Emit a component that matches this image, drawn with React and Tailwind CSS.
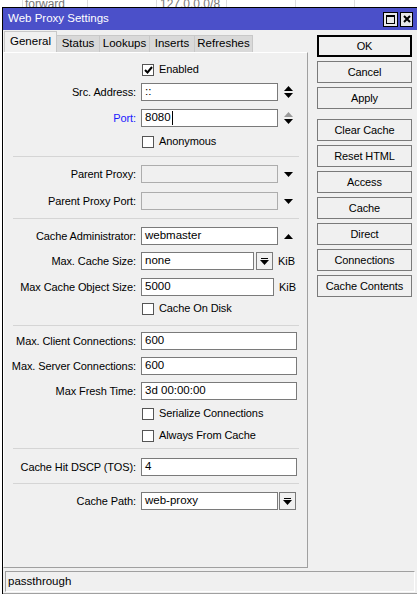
import React from 'react';

const font = "font-['Liberation_Sans',Arial,sans-serif]";

function Tri({ dir = 'down', color = '#000' }) {
  return (
    <svg width="9" height="5" viewBox="0 0 9 5">
      {dir === 'down' ? <path d="M0 0H9L4.5 5Z" fill={color} /> : <path d="M0 5H9L4.5 0Z" fill={color} />}
    </svg>
  );
}

function DropBtn() {
  return (
    <div className="flex h-[18px] w-[17px] shrink-0 flex-col items-center justify-center gap-px border border-[#7a7a7a] bg-[#f0f0f0]">
      <div className="h-px w-[7px] bg-black" />
      <Tri />
    </div>
  );
}

function Input({ value = '', w, disabled, caret }) {
  return (
    <div
      className={`flex h-[18px] shrink-0 items-center whitespace-nowrap border pl-[3px] text-[11.5px] text-black ${
        disabled ? 'border-[#adadad] bg-[#f0f0f0]' : 'border-[#7a7a7a] bg-white'
      }`}
      style={{ width: w }}
    >
      {value}
      {caret && <span className="ml-px h-[14px] w-px bg-black" />}
    </div>
  );
}

function Row({ label, blue, children, mt }) {
  return (
    <div className={`flex h-[18px] items-center gap-[5px] ${mt}`}>
      <div className={`w-[132px] whitespace-nowrap text-right text-[11px] tracking-[-0.1px] ${blue ? 'text-[#1a1aff]' : 'text-black'}`}>{label}</div>
      {children}
    </div>
  );
}

function Check({ label, checked, mt }) {
  return (
    <div className={`flex h-[13px] items-center gap-[5px] ${mt}`}>
      <div className="w-[132px]" />
      <div className="ml-px flex h-[12px] w-[12px] items-center justify-center border border-[#555] bg-white">
        {checked && (
          <svg width="9" height="8" viewBox="0 0 9 8">
            <path d="M1 4L3.5 6.5L8 1" stroke="#000" strokeWidth="2" fill="none" />
          </svg>
        )}
      </div>
      <span className="whitespace-nowrap text-[11px] tracking-[-0.1px] text-black">{label}</span>
    </div>
  );
}

function Sep({ mt }) {
  return <div className={`ml-[9px] mr-[8px] h-px bg-[#d5d5d5] ${mt}`} />;
}

function Btn({ children, ok, mt = 'mt-[4px]' }) {
  return (
    <div
      className={`flex h-[22px] w-[95px] items-center justify-center whitespace-nowrap text-[11px] tracking-[-0.1px] text-black ${mt} ${
        ok ? 'border-2 border-black bg-[#f0f0f0]' : 'border border-[#7a7a7a] bg-[#f0f0f0]'
      }`}
    >
      {children}
    </div>
  );
}

const tabs = ['Status', 'Lookups', 'Inserts', 'Refreshes'];
const tabW = { Status: 'w-[43px]', Lookups: 'w-[50px]', Inserts: 'w-[45px]', Refreshes: 'w-[58px]' };

export default function App() {
  return (
    <div className={`flex h-[594px] w-[417px] flex-col overflow-hidden bg-white ${font}`}>
      {/* background window peeking through */}
      <div className="flex h-[7px] shrink-0 items-end overflow-hidden text-[12px] leading-none text-[#777]">
        <div className="h-full w-[23px] border-r border-[#ddd]" />
        <div className="mb-[-3px] h-[12px] w-[65px] border-r border-[#ddd] pl-[2px]">forward</div>
        <div className="h-full w-[69px] border-r border-[#ddd]" />
        <div className="mb-[-3px] h-[12px] w-[70px] border-r border-[#ddd] pl-[3px]">127.0.0.0/8</div>
        <div className="h-full w-[69px] border-r border-[#ddd]" />
        <div className="h-full w-[59px] border-r border-[#ddd]" />
      </div>

      <div className="flex min-h-0 flex-1">
        <div className="w-[2px] shrink-0 bg-white" />
        <div className="flex min-w-0 flex-1 flex-col border-l border-t border-black bg-[#f0f0f0]">
          {/* title bar */}
          <div className="flex h-[22px] shrink-0 items-center bg-[#4b50c9] pl-[5px] pr-[4px]">
            <span className="flex-1 text-[11.5px] text-white">Web Proxy Settings</span>
            <div className="flex h-[15px] w-[15px] items-center justify-center border border-black bg-[#e8e8e8]">
              <div className="h-[9px] w-[9px] border border-black border-t-2" />
            </div>
            <div className="ml-[2px] flex h-[15px] w-[13px] items-center justify-center border border-black bg-[#e8e8e8]">
              <svg width="8" height="8" viewBox="0 0 8 8">
                <path d="M1 1L7 7M7 1L1 7" stroke="#000" strokeWidth="2" />
              </svg>
            </div>
          </div>

          <div className="flex min-h-0 flex-1">
            {/* left column */}
            <div className="flex w-[305px] shrink-0 flex-col">
              <div className="flex h-[22px] items-end pl-[1px] text-[11.5px] text-black">
                <div className="flex h-[21px] w-[53px] items-center justify-center border border-b-0 border-[#c8c8c8] bg-[#f0f0f0]">General</div>
                {tabs.map((t) => (
                  <div key={t} className={`flex h-[17px] ${tabW[t]} items-center justify-center border-r border-t border-[#c8c8c8] bg-[#d9d9d9]`}>
                    {t}
                  </div>
                ))}
              </div>
              <div className="flex flex-1 flex-col border border-b-[#a0a0a0] border-l-white border-r-[#a0a0a0] border-t-white">
                <Check label="Enabled" checked mt="mt-[10px]" />
                <Row label="Src. Address:" mt="mt-[7px]">
                  <Input value="::" w="137px" />
                  <div className="ml-[1px] flex flex-col gap-[2px]">
                    <Tri dir="up" />
                    <Tri />
                  </div>
                </Row>
                <Row label="Port:" blue mt="mt-[8px]">
                  <Input value="8080" w="137px" caret />
                  <div className="ml-[1px] flex flex-col gap-[2px]">
                    <Tri dir="up" color="#9a9a9a" />
                    <Tri />
                  </div>
                </Row>
                <Check label="Anonymous" mt="mt-[8px]" />
                <Sep mt="mt-[8px]" />
                <Row label="Parent Proxy:" mt="mt-[8px]">
                  <Input w="137px" disabled />
                  <div className="ml-[1px]"><Tri /></div>
                </Row>
                <Row label="Parent Proxy Port:" mt="mt-[9px]">
                  <Input w="137px" disabled />
                  <div className="ml-[1px]"><Tri /></div>
                </Row>
                <Sep mt="mt-[8px]" />
                <Row label="Cache Administrator:" mt="mt-[8px]">
                  <Input value="webmaster" w="137px" />
                  <div className="ml-[1px]"><Tri dir="up" /></div>
                </Row>
                <Row label="Max. Cache Size:" mt="mt-[7px]">
                  <Input value="none" w="113px" />
                  <div className="-ml-[3px]"><DropBtn /></div>
                  <span className="text-[11px] text-black">KiB</span>
                </Row>
                <Row label="Max Cache Object Size:" mt="mt-[8px]">
                  <Input value="5000" w="133px" />
                  <span className="text-[11px] text-black">KiB</span>
                </Row>
                <Check label="Cache On Disk" mt="mt-[6px]" />
                <Sep mt="mt-[10px]" />
                <Row label="Max. Client Connections:" mt="mt-[6px]">
                  <Input value="600" w="156px" />
                </Row>
                <Row label="Max. Server Connections:" mt="mt-[7px]">
                  <Input value="600" w="156px" />
                </Row>
                <Row label="Max Fresh Time:" mt="mt-[7px]">
                  <Input value="3d 00:00:00" w="156px" />
                </Row>
                <Check label="Serialize Connections" mt="mt-[7px]" />
                <Check label="Always From Cache" mt="mt-[9px]" />
                <Sep mt="mt-[6px]" />
                <Row label="Cache Hit DSCP (TOS):" mt="mt-[9px]">
                  <Input value="4" w="156px" />
                </Row>
                <Sep mt="mt-[7px]" />
                <Row label="Cache Path:" mt="mt-[8px]">
                  <Input value="web-proxy" w="137px" />
                  <div className="-ml-[4px]"><DropBtn /></div>
                </Row>
              </div>
            </div>

            {/* right column */}
            <div className="flex flex-col pl-[9px] pt-[5px]">
              <Btn ok mt="mt-0">OK</Btn>
              <Btn>Cancel</Btn>
              <Btn>Apply</Btn>
              <Btn mt="mt-[10px]">Clear Cache</Btn>
              <Btn>Reset HTML</Btn>
              <Btn>Access</Btn>
              <Btn>Cache</Btn>
              <Btn>Direct</Btn>
              <Btn>Connections</Btn>
              <Btn>Cache Contents</Btn>
            </div>
          </div>

          {/* status bar */}
          <div className="mx-[2px] mb-[1px] mt-[3px] flex h-[21px] shrink-0 items-center border border-b-white border-l-[#a0a0a0] border-r-white border-t-[#a0a0a0] pl-[2px] text-[11.5px] text-black">
            passthrough
          </div>
          <div className="h-px shrink-0 bg-[#a0a0a0]" />
        </div>
      </div>
    </div>
  );
}
